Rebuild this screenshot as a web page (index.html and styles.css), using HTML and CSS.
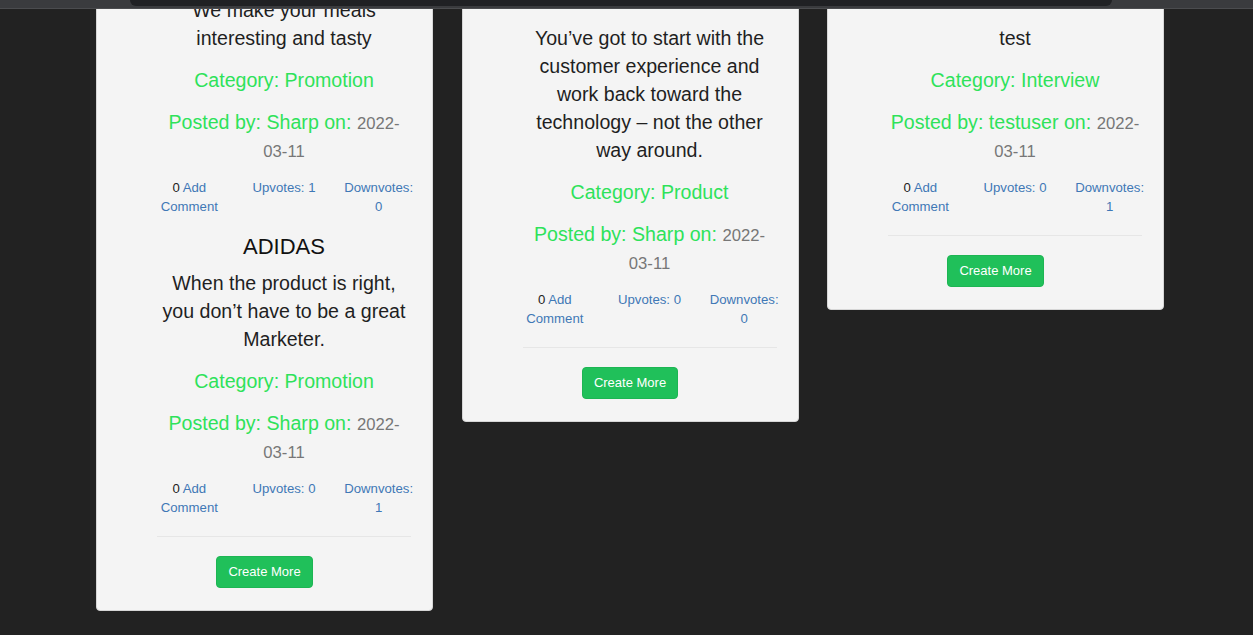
FILE: index.html
```html
<!DOCTYPE html>
<html lang="en">
<head>
<meta charset="utf-8">
<title>Posts</title>
<link rel="stylesheet" href="styles.css">
</head>
<body>
<div class="chrome-bar"><div class="chrome-pill"></div></div>
<main class="board">
  <section class="card">
    <ul class="posts">
      <li class="post">
        <h3 class="post-title">ZOMATO</h3>
        <p class="quote">We make your meals interesting and tasty</p>
        <p class="meta">Category: Promotion</p>
        <p class="meta">Posted by: Sharp on: <span class="date">2022-03-11</span></p>
        <div class="votes">
          <div class="vote-col"><span class="count">0</span> <a href="#">Add Comment</a></div>
          <div class="vote-col"><a href="#">Upvotes: 1</a></div>
          <div class="vote-col"><a href="#">Downvotes: 0</a></div>
        </div>
      </li>
      <li class="post">
        <h3 class="post-title">ADIDAS</h3>
        <p class="quote">When the product is right, you don’t have to be a great Marketer.</p>
        <p class="meta">Category: Promotion</p>
        <p class="meta">Posted by: Sharp on: <span class="date">2022-03-11</span></p>
        <div class="votes">
          <div class="vote-col"><span class="count">0</span> <a href="#">Add Comment</a></div>
          <div class="vote-col"><a href="#">Upvotes: 0</a></div>
          <div class="vote-col"><a href="#">Downvotes: 1</a></div>
        </div>
      </li>
    </ul>
    <hr class="rule">
    <div class="actions"><a class="btn" href="#">Create More</a></div>
  </section>

  <section class="card">
    <ul class="posts">
      <li class="post">
        <h3 class="post-title spaced">APPLE</h3>
        <p class="quote">You’ve got to start with the customer experience and work back toward the technology – not the other way around.</p>
        <p class="meta">Category: Product</p>
        <p class="meta">Posted by: Sharp on: <span class="date">2022-03-11</span></p>
        <div class="votes">
          <div class="vote-col"><span class="count">0</span> <a href="#">Add Comment</a></div>
          <div class="vote-col"><a href="#">Upvotes: 0</a></div>
          <div class="vote-col"><a href="#">Downvotes: 0</a></div>
        </div>
      </li>
    </ul>
    <hr class="rule">
    <div class="actions"><a class="btn" href="#">Create More</a></div>
  </section>

  <section class="card">
    <ul class="posts">
      <li class="post">
        <h3 class="post-title spaced">TEST</h3>
        <p class="quote">test</p>
        <p class="meta">Category: Interview</p>
        <p class="meta">Posted by: testuser on: <span class="date">2022-03-11</span></p>
        <div class="votes">
          <div class="vote-col"><span class="count">0</span> <a href="#">Add Comment</a></div>
          <div class="vote-col"><a href="#">Upvotes: 0</a></div>
          <div class="vote-col"><a href="#">Downvotes: 1</a></div>
        </div>
      </li>
    </ul>
    <hr class="rule">
    <div class="actions"><a class="btn" href="#">Create More</a></div>
  </section>
</main>
</body>
</html>
```

FILE: styles.css
```css
* { box-sizing: border-box; }

html, body {
  margin: 0;
  padding: 0;
  background: #222222;
  font-family: "Liberation Sans", Arial, sans-serif;
  overflow: hidden;
}

.chrome-bar {
  position: fixed;
  top: 0;
  left: 0;
  right: 0;
  height: 9px;
  background: #3a3b3e;
  border-bottom: 1px solid #4b4c4f;
  z-index: 10;
}

.chrome-pill {
  margin-left: 130px;
  width: 982px;
  height: 6px;
  background: #202124;
  border-radius: 0 0 8px 8px;
}

.board {
  display: grid;
  grid-template-columns: repeat(3, 337px);
  column-gap: 28.5px;
  align-items: start;
  margin-top: -61px;
  padding-left: 96px;
}

.card {
  background: #f4f4f4;
  border: 1px solid #d6d6d6;
  border-radius: 4px;
  padding: 20px 21px 22px 21px;
}

.posts {
  list-style: none;
  margin: 0;
  padding: 0 0 0 39px;
}

.post {
  text-align: center;
}

.post + .post {
  margin-top: 17px;
}

.post-title {
  margin: 0 0 8px;
  font-size: 22px;
  line-height: 28px;
  font-weight: normal;
  color: #111;
}

.post-title.spaced {
  margin-bottom: 36px;
}

.quote,
.meta {
  margin: 0 0 14px;
  font-size: 19.6px;
  line-height: 28px;
}

.quote {
  color: #1f1f1f;
}

.meta {
  color: #2ee25a;
}

.date {
  color: #777777;
  font-size: 85%;
  line-height: 1;
}

.votes {
  display: flex;
  margin: 0 -15px;
}

.vote-col {
  flex: 1 1 0;
  padding: 0 12px;
  text-align: center;
  font-size: 13.2px;
  line-height: 19px;
}

.count {
  color: #222;
}

.vote-col a {
  color: #3f78b6;
  text-decoration: none;
}

.rule {
  margin: 18.5px 0 19px 39px;
  border: 0;
  border-top: 1px solid #e6e6e6;
  height: 0;
}

.actions {
  text-align: center;
}

.btn {
  display: inline-block;
  padding: 6px 11px;
  font-size: 13px;
  line-height: 18px;
  color: #ffffff;
  background: #20c05a;
  border: 1px solid #1db553;
  border-radius: 4px;
  text-decoration: none;
}
```
